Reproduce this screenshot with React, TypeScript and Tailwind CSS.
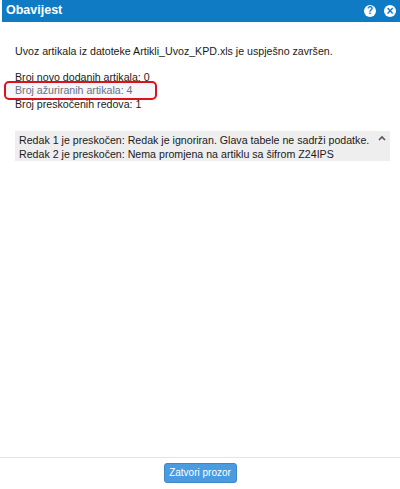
import React from "react";

const font = { fontFamily: '"Liberation Sans", Arial, sans-serif' };

const App = () => {
  return (
    <div
      className="w-[400px] h-[489px] flex flex-col bg-white overflow-hidden text-[10.64px] leading-[13.5px] text-[#1a1a1a]"
      style={font}
    >
      <div className="h-[22px] ml-[2px] flex flex-row items-center justify-between bg-[#0f7bc4] pl-[4px] pr-[4px]">
        <span className="font-bold text-[12.5px] text-white">Obavijest</span>
        <div className="flex flex-row items-center gap-[8px]">
          <span className="w-[12px] h-[12px] rounded-full bg-white flex items-center justify-center text-[#0f7bc4] text-[10px] font-bold">
            ?
          </span>
          <span className="w-[12px] h-[12px] rounded-full bg-white flex items-center justify-center text-[#0f7bc4] text-[12px] font-bold leading-none">
            ×
          </span>
        </div>
      </div>

      <div className="flex-1 pl-[15px] pr-[10px] pt-[23px]">
        <p>Uvoz artikala iz datoteke Artikli_Uvoz_KPD.xls je uspješno završen.</p>
        <div className="mt-[12px]">
          <p>Broj novo dodanih artikala: 0</p>
          <p className="relative text-[#6b7280]">
            <span className="absolute -left-[11px] -top-[3px] w-[153px] h-[19px] rounded-[5px] border-2 border-[#e0101a] bg-[#f5f7fb]" />
            <span className="relative">Broj ažuriranih artikala: 4</span>
          </p>
          <p>Broj preskočenih redova: 1</p>
        </div>
        <div className="relative mt-[20px] h-[30px] overflow-hidden bg-[#eeeeee] pl-[4px] pt-[3px] pr-[16px] whitespace-nowrap">
          <p>Redak 1 je preskočen: Redak je ignoriran. Glava tabele ne sadrži podatke.</p>
          <p>Redak 2 je preskočen: Nema promjena na artiklu sa šifrom Z24IPS</p>
          <svg className="absolute right-[4px] top-[4px]" width="8" height="6" viewBox="0 0 8 6" fill="none">
            <path d="M1 5 L4 2 L7 5" stroke="#555555" strokeWidth="1.6" />
          </svg>
        </div>
      </div>

      <div className="h-[32px] border-t border-[#e5e5e5] flex items-start justify-center pt-[5px]">
        <button className="w-[73px] h-[20px] rounded-[3px] bg-[#4a9be0] border border-[#3f86c4] text-white text-[10px]">
          Zatvori prozor
        </button>
      </div>
    </div>
  );
};

export default App;
